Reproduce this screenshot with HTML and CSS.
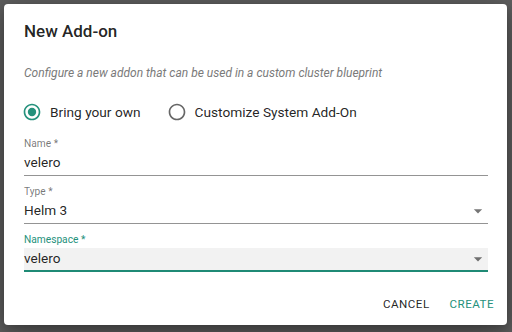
FILE: index.html
```html
<!DOCTYPE html>
<html>
<head>
<meta charset="utf-8">
<link rel="stylesheet" href="styles.css">
</head>
<body>
<div class="dialog">
  <h2 class="title">New Add-on</h2>
  <p class="subtitle">Configure a new addon that can be used in a custom cluster blueprint</p>
  <div class="radios">
    <label class="radio checked">
      <svg class="radio-icon" viewBox="0 0 24 24"><path d="M12 2C6.48 2 2 6.48 2 12s4.48 10 10 10 10-4.48 10-10S17.52 2 12 2zm0 18c-4.42 0-8-3.58-8-8s3.58-8 8-8 8 3.58 8 8-3.58 8-8 8z"/><circle cx="12" cy="12" r="5"/></svg>
      <span>Bring your own</span>
    </label>
    <label class="radio">
      <svg class="radio-icon" viewBox="0 0 24 24"><path d="M12 2C6.48 2 2 6.48 2 12s4.48 10 10 10 10-4.48 10-10S17.52 2 12 2zm0 18c-4.42 0-8-3.58-8-8s3.58-8 8-8 8 3.58 8 8-3.58 8-8 8z"/></svg>
      <span>Customize System Add-On</span>
    </label>
  </div>
  <div class="field">
    <div class="label">Name *</div>
    <div class="control"><span class="value">velero</span></div>
  </div>
  <div class="field">
    <div class="label">Type *</div>
    <div class="control"><span class="value">Helm 3</span><svg class="arrow" viewBox="0 0 24 24"><path d="M7 10l5 5 5-5z"/></svg></div>
  </div>
  <div class="field focused">
    <div class="label">Namespace *</div>
    <div class="control"><span class="value">velero</span><svg class="arrow" viewBox="0 0 24 24"><path d="M7 10l5 5 5-5z"/></svg></div>
  </div>
  <div class="actions">
    <button class="btn">CANCEL</button>
    <button class="btn primary">CREATE</button>
  </div>
</div>
</body>
</html>
```
FILE: styles.css
```css
html, body {
  margin: 0;
  padding: 0;
}
body {
  width: 512px;
  height: 332px;
  background: #5f5f5f;
  font-family: Roboto, "Liberation Sans", sans-serif;
  overflow: hidden;
}
.dialog {
  margin: 4px 0 0 4px;
  width: 503px;
  height: 321px;
  box-sizing: border-box;
  padding: 15px 19px 0 20px;
  background: #fff;
  border-radius: 4px;
  box-shadow: 0 9px 38px rgba(0,0,0,0.3), 0 4px 12px rgba(0,0,0,0.25);
  display: flex;
  flex-direction: column;
}
.title {
  margin: 0;
  font-size: 17px;
  font-weight: 500;
  line-height: 24px;
  color: rgba(0,0,0,0.87);
}
.subtitle {
  margin: 22px 0 0;
  font-size: 12px;
  line-height: 16px;
  font-style: italic;
  color: #7a7a7a;
}
.radios {
  margin-top: 19px;
  display: flex;
  align-items: center;
  height: 24px;
}
.radio {
  display: flex;
  align-items: center;
  font-size: 13.7px;
  line-height: 24px;
  color: rgba(0,0,0,0.87);
  margin-right: 28px;
}
.radio-icon {
  width: 20px;
  height: 20px;
  margin-left: -2px;
  margin-right: 8px;
  fill: rgba(0,0,0,0.6);
}
.radio.checked .radio-icon {
  fill: #25917c;
}
.field {
  margin-top: 10px;
  display: flex;
  flex-direction: column;
}
.radios + .field {
  margin-top: 14px;
}
.label {
  font-size: 10.2px;
  line-height: 12px;
  color: rgba(0,0,0,0.54);
}
.control {
  margin-top: 2px;
  display: flex;
  align-items: center;
  justify-content: space-between;
  height: 20px;
  padding-bottom: 3px;
  border-bottom: 1px solid #949494;
}
.value {
  font-size: 13.6px;
  line-height: 20px;
  color: rgba(0,0,0,0.87);
}
.arrow {
  width: 20px;
  height: 20px;
  fill: rgba(0,0,0,0.54);
  margin-top: 1px;
}
.focused .label {
  color: #25917c;
}
.focused .control {
  background: #f2f2f2;
  padding-bottom: 2px;
  border-bottom: 2px solid #1f8a75;
}
.actions {
  margin-top: 22px;
  margin-right: -13px;
  display: flex;
  justify-content: flex-end;
  gap: 6px;
}
.btn {
  border: 0;
  background: transparent;
  font-family: Roboto, "Liberation Sans", sans-serif;
  font-size: 11.6px;
  font-weight: 400;
  letter-spacing: 0.04em;
  line-height: 20px;
  padding: 0 7px;
  color: rgba(0,0,0,0.87);
}
.btn.primary {
  color: #25917c;
}
```
